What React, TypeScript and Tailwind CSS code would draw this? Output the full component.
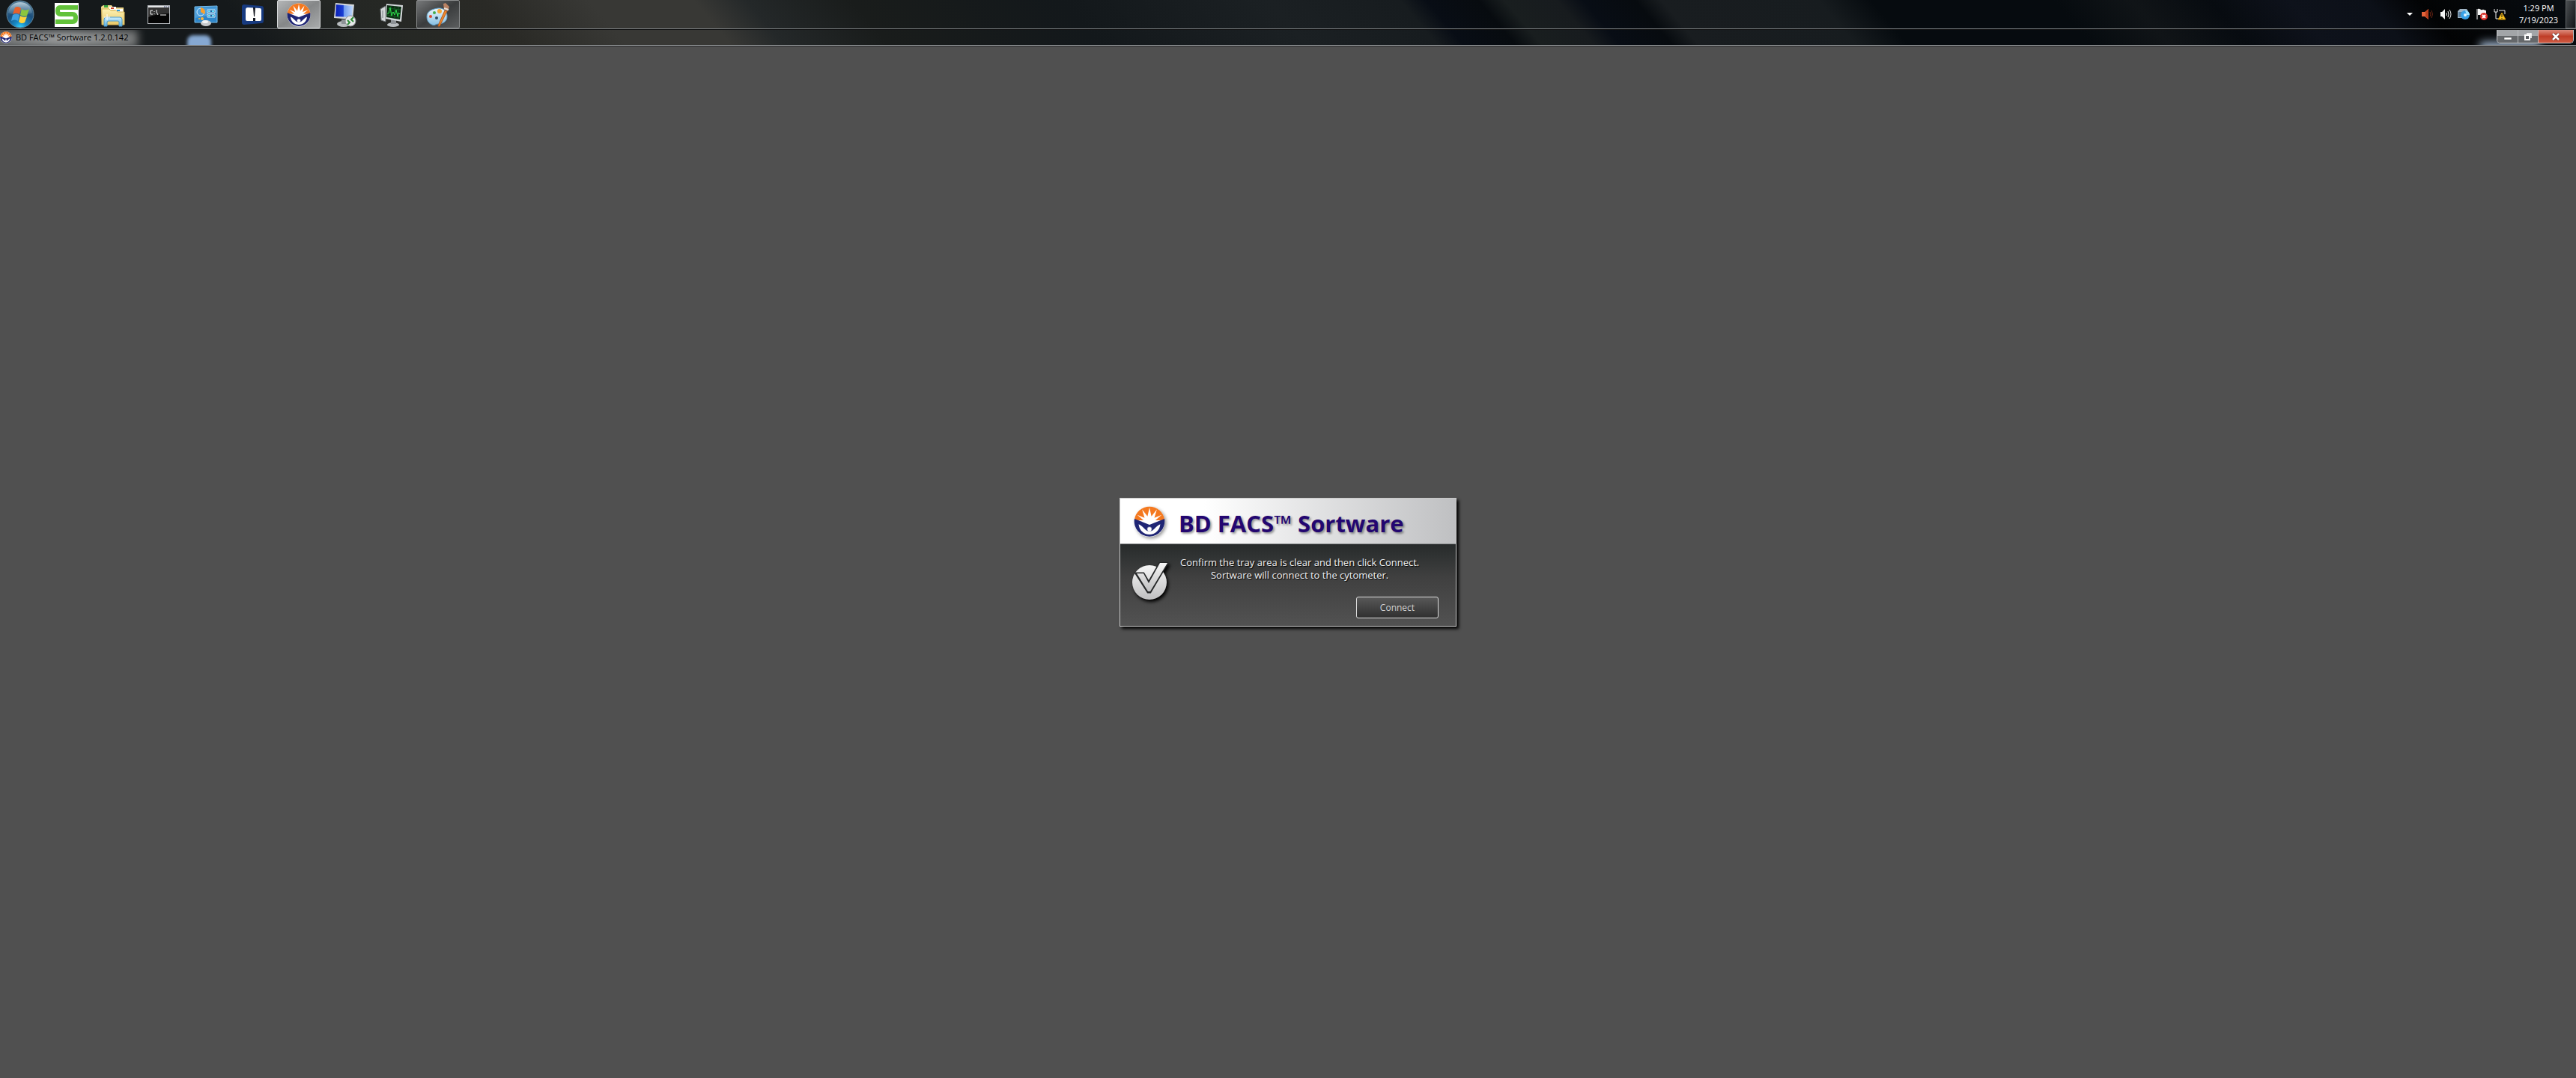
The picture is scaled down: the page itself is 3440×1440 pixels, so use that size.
import type { ReactNode } from "react";

function BdLogo({ className }: { className: string }) {
  return (
    <svg viewBox="0 0 64 64" className={className} aria-hidden="true">
      <circle cx="32" cy="32" r="31" fill="#fff" />
      <path d="M1.400 27A31 31 0 0 1 62.600 27L44 33H20Z" fill="#f47920" />
      <path
        d="M19 35 3 29 20 29 7 18 22 24 17 7 28 21 32 3 36 21 47 7 42 24 57 18 44 29 61 29 45 35Z"
        fill="#fff"
      />
      <path d="M1.400 26 32 38 62.600 26A31 31 0 1 1 1.400 26Z" fill="#1f2574" />
      <path
        d="M10 37C16 39 20 45 26 50H38C44 45 48 39 54 37C53 49 44 58 32 58C20 58 11 49 10 37Z"
        fill="#fff"
      />
      <circle cx="32" cy="47" r="5" fill="#fff" stroke="#1f2574" strokeWidth="1" />
      <path d="M28 51H36V55H28Z" fill="#fff" />
    </svg>
  );
}

function StartOrb() {
  return (
    <svg viewBox="0 0 38 38" className="size-[38px]" aria-hidden="true">
      <defs>
        <radialGradient id="orb" cx="50%" cy="100%" r="95%">
          <stop offset="0" stopColor="#35d6ff" />
          <stop offset=".25" stopColor="#1787c4" />
          <stop offset=".6" stopColor="#1c4f7c" />
          <stop offset="1" stopColor="#4f7894" />
        </radialGradient>
        <linearGradient id="orbShine" x1="0" y1="0" x2="0" y2="1">
          <stop offset="0" stopColor="#dcebf2" stopOpacity=".75" />
          <stop offset="1" stopColor="#7ba3bb" stopOpacity=".2" />
        </linearGradient>
      </defs>
      <circle cx="19" cy="19" r="18" fill="url(#orb)" stroke="#5d8299" strokeWidth="1" />
      <path d="M3 17C4 8 11 3 19 3S34 8 35 17C27 21 11 21 3 17Z" fill="url(#orbShine)" />
      <path d="M12 10C15 8 18 9 20 11L18 19C15 17 12 17 9 19Z" fill="#e8602a" />
      <path d="M21 12C24 14 28 14 31 12L28 21C25 22 22 22 19 20Z" fill="#8cc63e" />
      <path d="M9 20C12 18 15 18 18 20L16 28C13 26 10 26 7 28Z" fill="#3f9fe0" />
      <path d="M19 21C22 23 25 23 28 22L25 30C22 32 19 31 17 29Z" fill="#ffd23c" />
    </svg>
  );
}

function SnagIcon() {
  return (
    <svg viewBox="0 0 32 32" className="size-8" aria-hidden="true">
      <path d="M0 0H32V32H0Z" fill="#fff" />
      <path d="M31 6H7Q4 6 4 10.500T8 15H24Q28 15 28 20T24 25H1" fill="none" stroke="#62c23a" strokeWidth="6" />
    </svg>
  );
}

function ExplorerIcon() {
  return (
    <svg viewBox="0 0 32 32" className="size-8" aria-hidden="true">
      <defs>
        <linearGradient id="folder" x1="0" y1="0" x2="0" y2="1">
          <stop offset="0" stopColor="#fdf2b4" />
          <stop offset="1" stopColor="#e9c969" />
        </linearGradient>
        <linearGradient id="stand" x1="0" y1="0" x2="0" y2="1">
          <stop offset="0" stopColor="#cdeefb" />
          <stop offset="1" stopColor="#5cb0e2" />
        </linearGradient>
      </defs>
      <path d="M0 5 3 3H14L16 6H30L31 28H1Z" fill="#efd88b" />
      <path d="M4 3H9V6H4Z" fill="#3aa63c" />
      <path d="M11 5H20V9H11Z" fill="#fff" />
      <path d="M13 6H17V8H13Z" fill="#cf4323" />
      <path d="M19 8H29V12H19Z" fill="#fff" />
      <path d="M21 9H25V11H21Z" fill="#2c9bd6" />
      <path d="M1 8H11L13 10H20L22 12H31V29H1Z" fill="url(#folder)" stroke="#d8b558" strokeWidth="1" />
      <path d="M4 31V22Q4 19 7 19H25Q28 19 28 22V31H24V25Q24 24 22 24H10Q8 24 8 26V31Z" fill="url(#stand)" stroke="#4a9acb" strokeWidth="1" />
      <path d="M8 15V23M4 19H12" stroke="#fff" strokeWidth="1" />
    </svg>
  );
}

function ConsoleIcon() {
  return (
    <svg viewBox="0 0 32 32" className="size-8" aria-hidden="true">
      <path d="M0 3H30V28H0Z" fill="#b9bcc0" />
      <path d="M1 6H29V27H1Z" fill="#050505" />
      <path d="M1 4H29V6H1Z" fill="#e2e4e6" />
      <path d="M22 5H24M25 5H26M27 5H29" stroke="#444f78" strokeWidth="1" />
      <path d="M1 6H29V14Q13 14 1 19Z" fill="#333" />
      <path d="M7 10H4V15H7M9 11V12M9 14V15M12 9V12L14 16M17 16H25" fill="none" stroke="#fff" strokeWidth="1" />
    </svg>
  );
}

function ControlPanelIcon() {
  return (
    <svg viewBox="0 0 32 32" className="size-8" aria-hidden="true">
      <path d="M1 5 31 4V26H1Z" fill="#2f86c9" stroke="#7cc1ee" strokeWidth="1" />
      <path d="M2 6H30V14L2 20Z" fill="#5aa9e2" opacity=".7" />
      <circle cx="9" cy="12" r="5" fill="#4ea0df" stroke="#d4edfb" strokeWidth="1" />
      <path d="M9 12V6A6 6 0 0 1 14 15Z" fill="#f9a02b" />
      <path d="M18 9H28V13H18ZM18 15H28V19H18Z" fill="#1d5c9d" stroke="#d4edfb" strokeWidth="1" />
      <path d="M19 11H22M24 11H27M19 17H22M24 17H27" stroke="#5fe0fa" strokeWidth="2" />
      <circle cx="7" cy="21" r="1" fill="#ffb43c" />
      <circle cx="11" cy="21" r="2" fill="#ffb43c" />
      <ellipse cx="16" cy="27" rx="7" ry="4" fill="#c6c8cb" />
      <ellipse cx="15" cy="25" rx="4" ry="2" fill="#f3f4f5" />
    </svg>
  );
}

function AlertIcon() {
  return (
    <svg viewBox="0 0 32 32" className="size-8" aria-hidden="true">
      <path d="M5 2 28 4Q31 4 31 7V24Q31 27 28 27L5 29Q2 29 2 26V5Q2 2 5 2Z" fill="#173a80" />
      <path d="M10 6 26 7Q28 7 28 9V22Q28 24 26 24L9 24Q7 24 7 22V9Q7 6 10 6Z" fill="#fff" />
      <path d="M17 6H20L19 18H18ZM17 20H20V24H17Z" fill="#10131c" />
    </svg>
  );
}

function RemoteIcon() {
  return (
    <svg viewBox="0 0 32 32" className="size-8" aria-hidden="true">
      <defs>
        <linearGradient id="rdp" x1="0" y1="0" x2="1" y2="0">
          <stop offset="0" stopColor="#0a1fb4" />
          <stop offset=".45" stopColor="#1a3fd4" />
          <stop offset=".5" stopColor="#6f9bf0" />
          <stop offset="1" stopColor="#bcd6fa" />
        </linearGradient>
      </defs>
      <ellipse cx="14" cy="28" rx="9" ry="4" fill="#b9bdc0" />
      <path d="M11 22H18V28H11Z" fill="#8d9296" />
      <path d="M3 0 28 2 26 22 1 20Z" fill="#d5d9dc" />
      <path d="M4 2 26 4 25 19 3 18Z" fill="url(#rdp)" />
      <circle cx="23" cy="24" r="7" fill="#e7e9ea" stroke="#8a8f93" strokeWidth="1" />
      <path d="M19 23 22 26 19 29M27 19 24 22 27 25" fill="none" stroke="#2c8a35" strokeWidth="2" />
    </svg>
  );
}

function MonitorIcon() {
  return (
    <svg viewBox="0 0 32 32" className="size-8" aria-hidden="true">
      <path d="M1 8 8 4V25L2 23Z" fill="#d3d7d9" stroke="#6d7376" strokeWidth="1" />
      <path d="M4 10V20" stroke="#777d80" strokeWidth="1" />
      <ellipse cx="18" cy="29" rx="8" ry="3" fill="#b9bdc0" />
      <path d="M15 22H22V28H15Z" fill="#8d9296" />
      <path d="M9 1 31 3 29 25 8 21Z" fill="#d5d9dc" />
      <path d="M10 3 29 5 27 22 9 19Z" fill="#0b2b12" />
      <path d="M11 7 28 9M11 12 28 14M10 16 27 19M15 4V20M20 4V21M25 5V21" stroke="#145c22" strokeWidth="1" />
      <path d="M10 14H12L14 6 16 17 18 12 20 16 22 9 24 18 25 13 27 15" fill="none" stroke="#2ee04c" strokeWidth="1" />
    </svg>
  );
}

function PaintIcon() {
  return (
    <svg viewBox="0 0 32 32" className="size-8" aria-hidden="true">
      <defs>
        <linearGradient id="palette" x1="0" y1="0" x2="0" y2="1">
          <stop offset="0" stopColor="#edf8fd" />
          <stop offset="1" stopColor="#86bfe2" />
        </linearGradient>
      </defs>
      <path
        d="M16 7C24 6 28 12 28 18C28 25 22 28 16 28C12 28 12 31 8 29C3 27 1 23 1 18C1 11 8 8 16 7Z"
        fill="url(#palette)"
        stroke="#5e9cc4"
        strokeWidth="1"
      />
      <circle cx="6" cy="18" r="2" fill="#d9482f" />
      <circle cx="11" cy="13" r="2" fill="#44a94a" />
      <circle cx="18" cy="11" r="3" fill="#f5a93a" />
      <circle cx="14" cy="20" r="2" fill="#2b4a63" />
      <path d="M25 10 28 11 18 31 16 31 17 28Z" fill="#ef8a2d" stroke="#b4591a" strokeWidth="1" />
      <path d="M24 9 29 11 31 5 26 0 23 1Z" fill="#b98263" />
      <path d="M24 7 30 9" stroke="#e6e2da" strokeWidth="2" />
    </svg>
  );
}

type Task = { name: string; icon: ReactNode; look: string };

const idle = "border-transparent";
const tasks: Task[] = [
  { name: "Snag", icon: <SnagIcon />, look: idle },
  { name: "Explorer", icon: <ExplorerIcon />, look: idle },
  { name: "Command Prompt", icon: <ConsoleIcon />, look: idle },
  { name: "Control Panel", icon: <ControlPanelIcon />, look: idle },
  { name: "Alerts", icon: <AlertIcon />, look: idle },
  {
    name: "BD FACS Sortware",
    icon: <BdLogo className="size-8" />,
    look: "border-[#d8dadb] bg-linear-to-br from-[#b4b6b7] via-[#858788] to-[#a9abac]",
  },
  { name: "Remote Desktop", icon: <RemoteIcon />, look: idle },
  { name: "Performance Monitor", icon: <MonitorIcon />, look: idle },
  {
    name: "Paint",
    icon: <PaintIcon />,
    look: "border-[#8b8d8e] bg-linear-to-br from-[#77797a] via-[#3a3c3d] to-[#5c5e5f]",
  },
];

function TrayIcons() {
  return (
    <div className="flex items-center gap-2">
      <button type="button" aria-label="Hidden icons" className="flex size-4 items-center justify-center">
        <svg viewBox="0 0 8 4" className="h-1 w-2" aria-hidden="true">
          <path d="M0 0H8L4 4Z" fill="#fff" />
        </svg>
      </button>
      <svg viewBox="0 0 16 16" className="size-4" aria-hidden="true">
        <path d="M0 5H4L9 1V15L4 11H0Z" fill="#e4633a" />
        <path d="M5 5 9 1V15L5 11Z" fill="#b93f1e" />
        <path d="M11 5Q13 8 11 11M13 3Q16 8 13 13" fill="none" stroke="#6b2414" strokeWidth="1" />
      </svg>
      <svg viewBox="0 0 16 16" className="size-4" aria-hidden="true">
        <path d="M1 5H3L7 1V15L3 11H1Z" fill="#f4f4f4" />
        <path d="M9 6Q10 8 9 10M11 4Q13 8 11 12M13 2Q17 8 13 14" fill="none" stroke="#f4f4f4" strokeWidth="1" />
      </svg>
      <svg viewBox="0 0 16 16" className="size-4" aria-hidden="true">
        <path d="M0 4 3 1H12L14 4V13H0Z" fill="#9fb4c4" />
        <path d="M1 5H8V12H1Z" fill="#5d7f9c" />
        <circle cx="10" cy="9" r="6" fill="#38a1e6" />
        <path d="M10 3A6 6 0 0 1 16 9H12Z" fill="#9ee2fb" />
        <circle cx="10" cy="9" r="2" fill="#e4f4fc" />
      </svg>
      <svg viewBox="0 0 16 16" className="size-4" aria-hidden="true">
        <path d="M2 1V15" stroke="#fff" strokeWidth="1" />
        <path d="M3 1C6 0 7 3 9 2S12 3 14 3V9H3Z" fill="#f5f5f5" />
        <circle cx="11" cy="11" r="5" fill="#d8322a" />
        <path d="M9 9 13 13M13 9 9 13" stroke="#fff" strokeWidth="2" />
      </svg>
      <svg viewBox="0 0 16 16" className="size-4" aria-hidden="true">
        <path d="M1 1V5H5V1M3 5V14H8M7 3H15V8" fill="none" stroke="#f2f2f2" strokeWidth="1" />
        <path d="M11 6 16 15H6Z" fill="#fbc623" stroke="#c98f0a" strokeWidth="1" />
        <path d="M11 8V12M11 13V14" stroke="#1b1b1b" strokeWidth="1" />
      </svg>
    </div>
  );
}

function Taskbar() {
  return (
    <nav className="flex h-[39px] items-stretch border-b border-[#85898b]">
      <button type="button" aria-label="Start" className="flex w-[60px] items-center pl-2">
        <StartOrb />
      </button>
      <div className="flex gap-1">
        {tasks.map((task) => (
          <button
            key={task.name}
            type="button"
            aria-label={task.name}
            className={`flex w-[58px] items-center justify-center rounded-xs border pt-px ${task.look}`}
          >
            {task.icon}
          </button>
        ))}
      </div>
      <div className="ml-auto flex items-stretch">
        <TrayIcons />
        <div className="flex w-20 flex-col justify-center pl-2 text-center text-[11px] leading-4 text-white">
          <time>1:29 PM</time>
          <time>7/19/2023</time>
        </div>
        <button
          type="button"
          aria-label="Show desktop"
          className="w-[14px] border border-[#5d6163] bg-linear-to-br from-[#4a4e51] to-[#14171a]"
        />
      </div>
    </nav>
  );
}

function TitleBar() {
  return (
    <header className="relative flex h-[22px] items-start overflow-hidden border-t border-b border-t-[#08090a] border-b-[#a3a6a8]">
      <div className="absolute top-0 -left-4 h-[24px] w-[200px] bg-linear-to-r from-[#6d6f70] via-[#9a9c9d] to-[#777979] blur-[6px]" />
      <div className="absolute top-[7px] left-[250px] h-5 w-8 rounded-t-lg bg-[#86a8d2] blur-[2px]" />
      <div className="absolute right-12 -bottom-3 h-4 w-20 bg-[#9fb4cc] blur-[6px]" />
      <div className="relative flex h-5 items-center gap-[5px] text-[11px] text-black">
        <BdLogo className="size-4" />
        <h1>BD FACS™ Sortware 1.2.0.142</h1>
      </div>
      <div className="relative mr-[3px] ml-auto flex h-[18px] overflow-hidden rounded-b-[5px] border border-t-0 border-[#c9cccf]">
        <button
          type="button"
          aria-label="Minimize"
          className="flex w-7 items-center justify-center border-r border-[#babdc0] bg-linear-to-b from-[#a2a5a8] from-45% to-[#65686b] to-50%"
        >
          <svg viewBox="0 0 12 10" className="h-[10px] w-3" aria-hidden="true">
            <path d="M1 6H11V9H1Z" fill="#fff" stroke="#4b4e52" strokeWidth=".5" />
          </svg>
        </button>
        <button
          type="button"
          aria-label="Restore"
          className="flex w-[27px] items-center justify-center border-r border-[#babdc0] bg-linear-to-b from-[#a2a5a8] from-45% to-[#65686b] to-50%"
        >
          <svg viewBox="0 0 12 12" className="size-3" aria-hidden="true">
            <path d="M4 2H10V8" fill="none" stroke="#fff" strokeWidth="1.500" />
            <path d="M2 4H8V10H2Z" fill="#5c5f63" stroke="#fff" strokeWidth="2" />
          </svg>
        </button>
        <button
          type="button"
          aria-label="Close"
          className="flex w-[46px] items-center justify-center bg-linear-to-b from-[#dc8b7c] from-0% via-[#bf3d27] via-50% to-[#cf5a42]"
        >
          <svg viewBox="0 0 12 10" className="h-[10px] w-3" aria-hidden="true">
            <path d="M2 1 10 9M10 1 2 9" stroke="#5b2a24" strokeWidth="4" />
            <path d="M2 1 10 9M10 1 2 9" stroke="#fff" strokeWidth="2.500" />
          </svg>
        </button>
      </div>
    </header>
  );
}

function CheckBadge() {
  return (
    <svg viewBox="0 0 48 52" className="h-[52px] w-12 drop-shadow-[2px_3px_2px_#000000]" aria-hidden="true">
      <defs>
        <linearGradient id="badge" x1="0" y1="0" x2="0" y2="1">
          <stop offset="0" stopColor="#f6f6f6" />
          <stop offset="1" stopColor="#bfbfc0" />
        </linearGradient>
      </defs>
      <circle cx="23" cy="27" r="23" fill="url(#badge)" />
      <path d="M5 15H15L22 27 37 1H47L24 40H21Z" fill="none" stroke="#262829" strokeWidth="3" />
      <path d="M6 15H15L22 28 37 1H47L24 39H21Z" fill="url(#badge)" />
    </svg>
  );
}

function ConnectDialog() {
  return (
    <section
      role="dialog"
      aria-labelledby="dialog-title"
      className="flex w-[450px] flex-col border border-[#c8c8c8] bg-[#505050] shadow-[3px_3px_4px_#000000]"
    >
      <div className="flex h-[60px] items-center gap-[18px] bg-linear-to-r from-white from-25% to-[#bfc0c2] pt-px pl-[18px]">
        <BdLogo className="size-[42px] drop-shadow-[2px_2px_2px_#00000066]" />
        <h2
          id="dialog-title"
          className="pt-1 text-[31px] leading-10 font-bold text-[#230670] [text-shadow:2px_2px_3px_#00000066]"
        >
          BD FACS™ Sortware
        </h2>
      </div>
      <div className="flex h-[110px] gap-4 border-t border-[#8d9091] bg-linear-to-b from-[#272b2b] via-[#404040] via-40% to-[#525252] pr-[23px] pl-4">
        <div className="pt-6">
          <CheckBadge />
        </div>
        <div className="flex flex-1 flex-col items-end">
          <p className="mt-4 self-start text-center text-[13px] leading-[17px] font-medium whitespace-nowrap text-[#f2f2f2] [text-shadow:1px_1px_1px_#000000]">
            Confirm the tray area is clear and then click Connect.
            <br />
            Sortware will connect to the cytometer.
          </p>
          <button
            type="button"
            className="mt-5 h-[29px] w-[110px] rounded-[3px] border border-[#dcdcdc] bg-linear-to-b from-[#585858] to-[#303030] text-xs text-[#d2d2d2]"
          >
            Connect
          </button>
        </div>
      </div>
    </section>
  );
}

export default function App() {
  return (
    <div className="flex min-h-screen flex-col bg-[#505050] [font-family:'Open_Sans','Noto_Sans',sans-serif]">
      <div className="border-b border-[#202224] bg-[linear-gradient(50deg,#15191b_0%,#15191b_10%,#242724_14%,#2a2a26_20%,#383835_24%,#383835_28%,#242829_30%,#191c1b_34%,#13181b_42%,#1b2023_50%,#171c1f_55%,#080d15_56%,#070b0f_58%,#191e1f_59%,#171b1e_61%,#080d15_62%,#070b0f_64%,#191d20_65%,#171c1f_71%,#060b0f_73%,#060b0f_80%,#101417_83%,#070b10_86%,#0e121b_89%,#0c1018_92%,#020304_94%,#050709_96%,#080d12_100%)]">
        <Taskbar />
        <TitleBar />
      </div>
      <main className="flex flex-1 items-center justify-center">
        <ConnectDialog />
      </main>
    </div>
  );
}
